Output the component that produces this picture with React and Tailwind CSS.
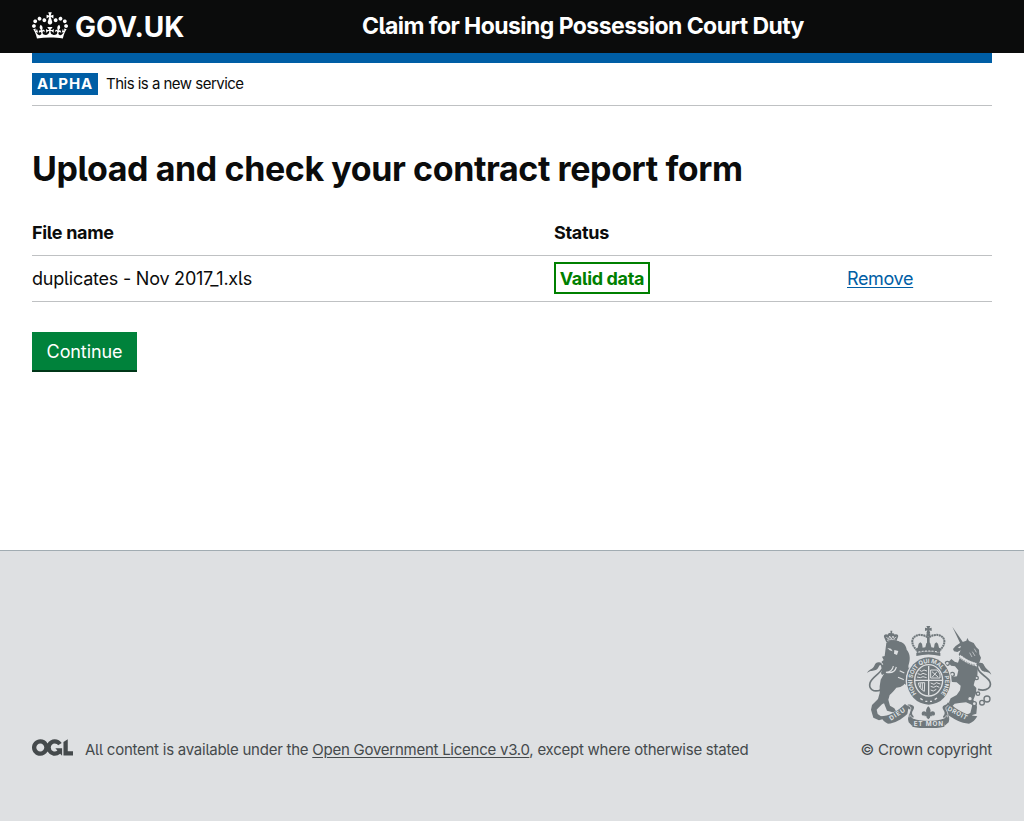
function Crown() {
  return (
    <svg viewBox="0 0 132 97" className="h-[27px] w-9 shrink-0" fill="currentColor" aria-hidden="true">
      <path
        fillRule="evenodd"
        d="M25 30.2c3.5 1.5 7.7-.2 9.1-3.7 1.5-3.6-.2-7.8-3.9-9.2-3.6-1.4-7.6.3-9.1 3.9-1.4 3.5.3 7.5 3.9 9zM9 39.5c3.6 1.5 7.8-.2 9.2-3.7 1.5-3.6-.2-7.8-3.9-9.1-3.6-1.5-7.6.2-9.1 3.8-1.4 3.5.3 7.5 3.8 9zM4.4 57.2c3.5 1.5 7.7-.2 9.1-3.8 1.5-3.6-.2-7.7-3.9-9.1-3.5-1.5-7.6.3-9.1 3.8-1.4 3.5.3 7.6 3.9 9.1zm38.3-21.4c3.5 1.5 7.7-.2 9.1-3.8 1.5-3.6-.2-7.7-3.9-9.1-3.6-1.5-7.6.3-9.1 3.8-1.3 3.6.4 7.7 3.9 9.1zm64.4-5.6c-3.6 1.5-7.8-.2-9.1-3.7-1.5-3.6.2-7.8 3.8-9.2 3.6-1.4 7.7.3 9.2 3.9 1.3 3.5-.4 7.5-3.9 9zm15.9 9.3c-3.6 1.5-7.7-.2-9.1-3.7-1.5-3.6.2-7.8 3.7-9.1 3.6-1.5 7.7.2 9.2 3.8 1.5 3.5-.3 7.5-3.8 9zm4.7 17.7c-3.6 1.5-7.8-.2-9.2-3.8-1.5-3.6.2-7.7 3.9-9.1 3.6-1.5 7.7.3 9.2 3.8 1.3 3.5-.4 7.6-3.9 9.1zM89.3 35.8c-3.6 1.5-7.8-.2-9.2-3.8-1.4-3.6.2-7.7 3.9-9.1 3.6-1.5 7.7.3 9.2 3.8 1.4 3.6-.3 7.7-3.9 9.1zM69.7 17.7l8.9 4.7V9.3l-8.9 2.8c-.2-.3-.5-.6-.9-.9L72.4 0H59.6l3.5 11.2c-.3.3-.6.5-.9.9l-8.8-2.8v13.1l8.8-4.7c.3.3.6.7.9.9l-5 15.4v.1c-.2.8-.4 1.6-.4 2.4 0 4.1 3.1 7.5 7 8.1h.2c.3 0 .7.1 1 .1.4 0 .7 0 1-.1h.2c4-.6 7.1-4.1 7.1-8.1 0-.8-.1-1.7-.4-2.4V34l-5.1-15.4c.4-.2.7-.6 1-.9zM66 92.8c16.9 0 32.8 1.1 47.1 3.2 4-16.9 8.9-26.7 14-33.5l-9.6-3.4c1 4.9 1.1 7.2 0 10.2-1.5-1.4-3-4.3-4.2-8.7L108.6 76c2.8-2 5-3.2 7.5-3.3-4.4 9.4-10 11.9-13.6 11.2-4.3-.8-6.3-4.6-5.6-7.9 1-4.7 5.7-5.9 8-.5 4.3-8.7-3-11.4-7.6-8.8 7.1-7.2 7.9-13.5 2.1-21.1-8 6.1-8.1 12.3-4.5 20.8-4.7-5.4-12.1-2.5-9.5 6.2 3.4-5.2 7.9-2 7.2 3.1-.6 4.3-6.4 7.8-13.5 7.2-10.3-.9-10.9-8-11.2-13.8 2.5-.5 7.1 1.8 11 7.3L80.2 60c-4.1 4.4-8 5.3-12.3 5.4 1.4-4.4 8-11.6 8-11.6H55.5s6.4 7.2 7.9 11.6c-4.2-.1-8-1-12.3-5.4l1.4 16.4c3.9-5.5 8.5-7.7 10.9-7.3-.3 5.8-.9 12.8-11.1 13.8-7.2.6-12.9-2.9-13.5-7.2-.7-5 3.8-8.3 7.1-3.1 2.7-8.7-4.6-11.6-9.4-6.2 3.7-8.5 3.6-14.7-4.6-20.8-5.8 7.6-5 13.9 2.2 21.1-4.7-2.6-11.9.1-7.7 8.8 2.3-5.5 7.1-4.2 8.1.5.7 3.3-1.3 7.1-5.7 7.9-3.5.7-9-1.8-13.5-11.2 2.5.1 4.7 1.3 7.5 3.3l-4.7-15.4c-1.2 4.4-2.7 7.2-4.3 8.7-1.1-3-.9-5.3 0-10.2l-9.5 3.4c5 6.9 9.9 16.7 14 33.5 14.8-2.1 30.8-3.2 47.7-3.2z"
      />
    </svg>
  );
}

function OglMark() {
  return (
    <svg viewBox="0 0 483.2 195.7" className="mb-1 h-[17px] w-[41px] shrink-0" fill="currentColor" aria-hidden="true">
      <path d="M421.5 142.8V.1l-50.7 32.3v161.1h112.4v-50.7zm-122.3-9.6A47.12 47.12 0 0 1 221 97.8c0-26 21.1-47.1 47.1-47.1 16.7 0 31.4 8.7 39.7 21.8l42.7-27.2A97.63 97.63 0 0 0 268.1 0c-36.5 0-68.3 20.1-85.1 49.7A98 98 0 0 0 97.8 0C43.9 0 0 43.9 0 97.8s43.9 97.8 97.8 97.8c36.5 0 68.3-20.1 85.1-49.7a97.76 97.76 0 0 0 149.6 25.4l19.4 22.2h3v-87.8h-80l24.3 27.5zM97.8 145c-26 0-47.1-21.1-47.1-47.1s21.1-47.1 47.1-47.1 47.1 21.1 47.1 47.1S123.8 145 97.8 145" />
    </svg>
  );
}

const BG = "#dee0e2";

function Crest() {
  return (
    <svg viewBox="12 12 375 306" className="h-[102px] w-[125px]" fill="#6f777b" stroke="none" aria-hidden="true">
      {/* royal crown */}
      <path d="M190 12h12l-3 7 7-2v10l-7-2 3 9h-12l3-9-7 2V17l7 2z" />
      <circle cx="196" cy="38" r="6" />
      <path
        d="M193 46C178 34 155 37 149 52c-4 12 3 22 11 32M199 46c15-12 38-9 44 6 4 12-3 22-11 32"
        fill="none" stroke="#6f777b" strokeWidth="6" strokeDasharray="6 1.5"
      />
      <path d="M192 44h8v34h-8z" />
      <path d="M158 80l6-3 3-12 5-4 5 4 2 12 8-1 3-12 6-5 6 5 3 12 8 1 2-12 5-4 5 4 3 12 7 3-5 13c-22-6-46-6-68 0z" />
      <path d="M160 93c24-6 48-6 72 0v9c-24-6-48-6-72 0z" />
      <path d="M166 90c20-4 40-4 60 0" fill="none" stroke={BG} strokeWidth="3" strokeDasharray="6 4" />

      {/* lion */}
      <path d="M70 61l-7-16c-2-7 6-11 11-7 1-4 6-6 9-4l-1-8h6l-1 8c4-1 7 1 8 4 6-4 13 1 10 7l-6 15c-9-4-20-3-29 1z" />
      <path d="M70 46l7 5 3-9 5 9 5-9 3 8 7-5M72 55c9-3 18-3 26 0" fill="none" stroke={BG} strokeWidth="2.5" />
      <path d="M70 62c10-9 30-10 40-3 12 2 20 12 21 24 9 10 11 24 8 37l-3 12 2 14-8 15-2 14-6 14-10 6-12 2c-6 8-14 16-20 22l-4 14 5 18 13 8 5 9-10 3-17-5-9-22-6 3-12 12-4 4 3 13 12 8 2 8-10 3-17-8-7-24 3-14 18-18 5-18v-20l3-20 10-18-6 4-3-6 4-13-4-9 7-4-6-7 7-6-5-10 8-2z" />
      <path d="M73 78l11 2 5 8-9-3M94 84l12 3-4 12-9-4" fill={BG} />
      <path d="M91 132c-2 14-12 18-22 19 16 3 28-3 31-16M124 153l-14-7M125 174l-20-8" fill="none" stroke={BG} strokeWidth="3.5" />
      <path d="M132 140l12-5 5 7-9 4 8 5-6 8-12-3zM123 168l15-2 3 8-8 5 6 5-5 7-13-7z" />
      <path
        d="M54 203c-22 10-38-2-33-20 5-17 28-26 36-42 6-13-8-19-15-9"
        fill="none" stroke="#6f777b" strokeWidth="5"
      />
      <path d="M12 153c6-13 17-10 22-22 4-12 15-13 23-6-10 1-9 17-21 20-10 3-15 1-24 8z" />

      {/* unicorn */}
      <path d="M268 14l34 50-8 5z" />
      <path d="M310 56l3-8 5 9 14 6 8 13 8 7 1 14 5 10-5 15-5 8-6-2-45-20-6-11 6-12-10 5-10-2-3-7 8-9 14-10z" />
      <path d="M290 108l48 20 6 14-1 22-8 14-3 12 8 8-1 16-8 20 7 10 4 10-2 21-12 4-3 8-14 4-10-2 8-10 13-6 6-24-19-8-20 2-14 2-6 6 7 12-9 6-12-9 6-10-3-9 5-12 18-10 10-14 2-14-12-10-14-1-12-12-9 3-5-14-8-5 5-7 14 5 14 15 16-2 4-18-10-12-12-2-8-10 9-10 10 8 10 3z" />
      <path d="M284 76l10-4-3 7" fill={BG} />
      <path d="M290 102c14 13 30 21 50 26" fill="none" stroke={BG} strokeWidth="10" />
      <path d="M289 106c13 11 30 20 48 24M294 99c12 10 29 18 46 23" fill="none" stroke="#6f777b" strokeWidth="2.5" strokeDasharray="5 3" />
      <path d="M334 80l6 11M328 89l8 13M320 92l7 13" stroke={BG} strokeWidth="2" />
      <path
        d="M345 202c27 8 43-7 35-24-7-15-31-21-36-39-3-14 10-19 17-8"
        fill="none" stroke="#6f777b" strokeWidth="5"
      />
      <path d="M385 158c-5-14-16-15-20-25-5-12-14-13-23-5 10 1 8 16 19 20 10 4 15 1 24 10z" />
      <g fill={BG} stroke="#6f777b" strokeWidth="4">
        <circle cx="341" cy="168" r="5" />
        <circle cx="321" cy="230" r="7" />
        <circle cx="334" cy="245" r="6" />
        <circle cx="345" cy="215" r="5" />
        <circle cx="357" cy="242" r="7" />
        <circle cx="372" cy="231" r="9" />
        <circle cx="253" cy="124" r="6" />
        <circle cx="268" cy="157" r="6" />
      </g>

      {/* garter and shield */}
      <ellipse cx="197" cy="177" rx="69" ry="75" fill={BG} />
      <ellipse cx="197" cy="177" rx="65" ry="71" />
      <ellipse cx="197" cy="175" rx="44" ry="49" fill={BG} />
      <ellipse cx="197" cy="175" rx="40" ry="45" />
      <path d="M197 132v88M156 175h82" stroke={BG} strokeWidth="4" />
      <g fill="none" stroke={BG} strokeWidth="3">
        <path d="M170 145l6 3 7-4 9 3M164 155l9 3 7-4 11 4M162 165l10 2 8-3 11 3" />
        <path d="M203 144h20l8 12v12h-28zM207 149l18 16M222 149l-14 16" />
        <path d="M203 183l10 4 7-5 12 4M203 193l9 3 8-4 9 4M203 204l8 3 9-5" />
        <path d="M166 183l19-1-1 26c-9-4-16-13-18-25zM172 184v12M178 183v20" />
      </g>
      <defs>
        <path id="garter" d="M161 215A49 55 0 1 1 234 214" />
      </defs>
      <text fill={BG} fontSize="18" fontWeight="700" fontFamily="Inter, sans-serif">
        <textPath href="#garter" textLength="244" lengthAdjust="spacingAndGlyphs">HONI SOIT QUI MAL Y PENSE</textPath>
      </text>
      <path d="M172 229l7 5M187 238h6M201 238h6M215 233l7-5" stroke={BG} strokeWidth="4" />

      {/* motto ribbon */}
      <path d="M52 283c26 0 50-14 74-37l11 8-4 22c-18 17-38 28-58 29-9-3-17-11-23-22z" />
      <path d="M343 283c-32-2-60-18-88-42l-9 13 3 20c22 18 45 30 69 31 10-3 19-11 25-22z" />
      <path d="M134 248c14-2 24 6 17 15-6 8-5 14 1 20l-5 28-10-10c-4-12-1-22 4-30 3-6 0-10-7-12zM258 248c-14-2-24 6-17 15 6 8 5 14-1 20l5 28 12-10c4-12 1-22-4-30-3-6 0-10 5-12z" />
      <path d="M145 289c30 10 72 10 102 0l-3 25c-28 7-68 7-96 0z" />
      <path d="M142 280c2 5 6 8 11 9 27 7 60 7 87 0 6-1 9-4 10-9" fill="none" stroke={BG} strokeWidth="2.5" />
      <path d="M136 251c9 3 9 9 4 17-3 6-3 12-2 18M256 251c-9 3-9 9-4 17 3 6 3 12 2 18" fill="none" stroke={BG} strokeWidth="2.5" />
      <g fill={BG} fontSize="19" fontWeight="700" fontFamily="Inter, sans-serif">
        <text x="152" y="311" textLength="88">ET MON</text>
        <text transform="translate(84 296) rotate(-33)" textLength="52">DIEU</text>
        <text transform="translate(252 264) rotate(28)" textLength="64">DROIT</text>
      </g>

      {/* fleur-de-lis */}
      <path d="M196 253c9 9 8 17 3 23 3-10 16-12 17-1 0 6-7 8-9 3-5 2-6 5-6 9l-5 5-5-5c0-4-1-7-6-9-2 5-9 3-9-3 1-11 14-9 17 1-5-6-6-14 3-23z" />
      <path d="M184 281h24" stroke="#6f777b" strokeWidth="3" />
    </svg>
  );
}

function Header() {
  return (
    <header className="h-[53px] bg-[#0b0c0c] px-8 text-white">
      <div className="flex h-[51px] items-center">
        <a className="flex w-[330px] items-center gap-[7px]">
          <Crown />
          <span className="pt-0.5 text-[28px] leading-8 font-bold tracking-[-0.05px]">GOV.UK</span>
        </a>
        <span className="text-[23px] leading-7 font-bold tracking-[-0.56px] whitespace-nowrap">
          Claim for Housing Possession Court Duty
        </span>
      </div>
    </header>
  );
}

function PhaseBanner() {
  return (
    <div className="flex h-[43px] items-center gap-2 border-b border-[#bfc1c3]">
      <strong className="flex h-[22px] w-[66px] items-center justify-center bg-[#005ea5] text-[15px] font-bold tracking-[0.8px] text-white">
        ALPHA
      </strong>
      <span className="text-[15px] tracking-[-0.52px] text-[#0b0c0c]">This is a new service</span>
    </div>
  );
}

function ReportTable() {
  return (
    <table className="mt-[21px] w-full table-fixed border-collapse text-left text-[18px] leading-[25px] tracking-[-0.22px]">
      <colgroup>
        <col className="w-[522px]" />
        <col className="w-[293px]" />
        <col />
      </colgroup>
      <thead>
        <tr className="h-[45px] border-b border-[#bfc1c3] tracking-[-0.3px]">
          <th className="p-0 font-bold">File name</th>
          <th className="p-0 font-bold">Status</th>
          <th className="p-0" />
        </tr>
      </thead>
      <tbody>
        <tr className="h-[46px] border-b border-[#bfc1c3]">
          <td className="p-0">duplicates - Nov 2017_1.xls</td>
          <td className="p-0">
            <span className="flex h-8 w-24 items-center justify-center border-2 border-[#008000] font-bold tracking-[-0.35px] whitespace-nowrap text-[#008000]">
              Valid data
            </span>
          </td>
          <td className="p-0">
            <a className="tracking-[-0.35px] text-[#005ea5] underline underline-offset-2">Remove</a>
          </td>
        </tr>
      </tbody>
    </table>
  );
}

function Footer() {
  return (
    <footer className="h-[271px] border-t border-[#a1acb2] bg-[#dee0e2] px-8 pt-[75px] text-[15px] leading-5 tracking-[-0.25px] text-[#454a4c]">
      <div className="flex items-end justify-between">
        <div className="flex items-end gap-3">
          <OglMark />
          <p className="whitespace-nowrap">
            All content is available under the <a className="underline underline-offset-2">Open Government Licence v3.0</a>,
            except where otherwise stated
          </p>
        </div>
        <div className="flex flex-col items-end gap-3">
          <Crest />
          <p className="whitespace-nowrap">© Crown copyright</p>
        </div>
      </div>
    </footer>
  );
}

export default function App() {
  return (
    <div className="flex h-[821px] flex-col bg-white font-['Inter','Liberation_Sans',sans-serif] text-[#0b0c0c] [font-feature-settings:'cv05','calt'_0]">
      <Header />
      <main className="flex-1 px-8">
        <div className="h-2.5 bg-[#005ea5]" />
        <PhaseBanner />
        <h1 className="mt-[43px] text-[34px] leading-10 font-bold tracking-[-0.4px] whitespace-nowrap">
          Upload and check your contract report form
        </h1>
        <ReportTable />
        <button className="mt-[30px] flex h-[38px] w-[105px] items-center justify-center bg-[#00823b] pt-px text-[18px] tracking-[-0.1px] text-white shadow-[0_2px_0_#003618]">
          Continue
        </button>
      </main>
      <Footer />
    </div>
  );
}
